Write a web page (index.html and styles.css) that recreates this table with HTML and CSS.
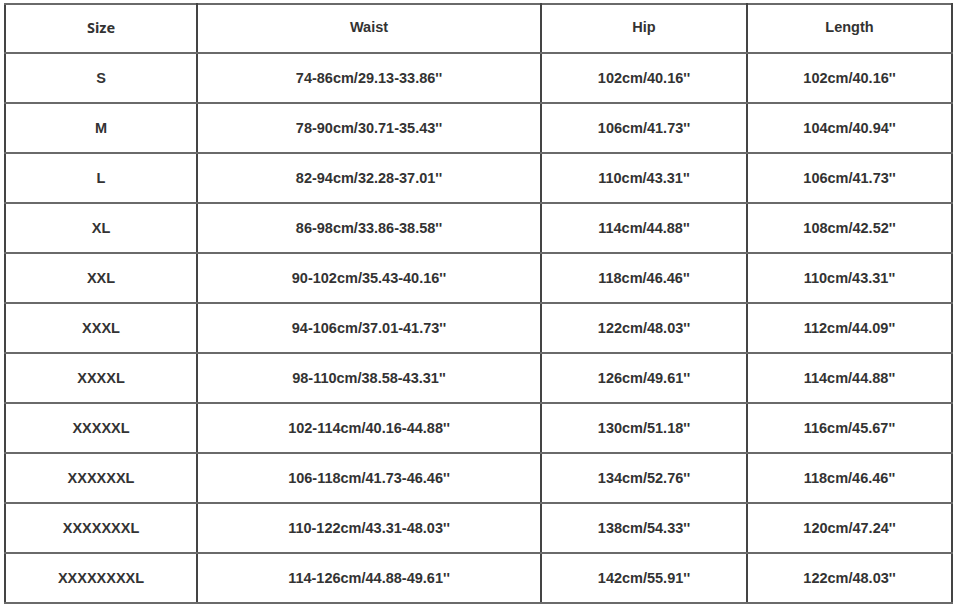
FILE: index.html
```html
<!DOCTYPE html>
<html>
<head>
<meta charset="utf-8">
<link rel="stylesheet" href="styles.css">
</head>
<body>
<table class="size-table">
<colgroup>
<col class="c1"><col class="c2"><col class="c3"><col class="c4">
</colgroup>
<thead>
<tr class="head"><th class="size-head">Size</th><th>Waist</th><th>Hip</th><th>Length</th></tr>
</thead>
<tbody>
<tr><td>S</td><td>74-86cm/29.13-33.86''</td><td>102cm/40.16''</td><td>102cm/40.16''</td></tr>
<tr><td>M</td><td>78-90cm/30.71-35.43''</td><td>106cm/41.73''</td><td>104cm/40.94''</td></tr>
<tr><td>L</td><td>82-94cm/32.28-37.01''</td><td>110cm/43.31''</td><td>106cm/41.73''</td></tr>
<tr><td>XL</td><td>86-98cm/33.86-38.58''</td><td>114cm/44.88''</td><td>108cm/42.52''</td></tr>
<tr><td>XXL</td><td>90-102cm/35.43-40.16''</td><td>118cm/46.46''</td><td>110cm/43.31''</td></tr>
<tr><td>XXXL</td><td>94-106cm/37.01-41.73''</td><td>122cm/48.03''</td><td>112cm/44.09''</td></tr>
<tr><td>XXXXL</td><td>98-110cm/38.58-43.31''</td><td>126cm/49.61''</td><td>114cm/44.88''</td></tr>
<tr><td>XXXXXL</td><td>102-114cm/40.16-44.88''</td><td>130cm/51.18''</td><td>116cm/45.67''</td></tr>
<tr><td>XXXXXXL</td><td>106-118cm/41.73-46.46''</td><td>134cm/52.76''</td><td>118cm/46.46''</td></tr>
<tr><td>XXXXXXXL</td><td>110-122cm/43.31-48.03''</td><td>138cm/54.33''</td><td>120cm/47.24''</td></tr>
<tr><td>XXXXXXXXL</td><td>114-126cm/44.88-49.61''</td><td>142cm/55.91''</td><td>122cm/48.03''</td></tr>
</tbody>
</table>
</body>
</html>
```
FILE: styles.css
```css
html, body {
  margin: 0;
  padding: 0;
  background: #ffffff;
}
body {
  padding: 3px 0 0 4px;
}
.size-table {
  border-collapse: collapse;
  table-layout: fixed;
  width: 947px;
  font-family: "Liberation Sans", Arial, sans-serif;
  font-weight: bold;
  font-size: 14.5px;
  color: #333333;
}
.c1 { width: 192px; }
.c2 { width: 344px; }
.c3 { width: 206px; }
.c4 { width: 205px; }
.size-table th,
.size-table td {
  border-top: 2px solid #6a6a6a;
  border-bottom: 2px solid #6a6a6a;
  border-left: 2px solid #444444;
  border-right: 2px solid #444444;
  text-align: center;
  vertical-align: middle;
  padding: 0;
  height: 48px;
  font-weight: bold;
}
.size-table .head th {
  height: 44px;
  padding-bottom: 3px;
}
.size-head {
  font-family: "Noto Sans", "Liberation Sans", sans-serif;
  font-weight: 600;
}
```
